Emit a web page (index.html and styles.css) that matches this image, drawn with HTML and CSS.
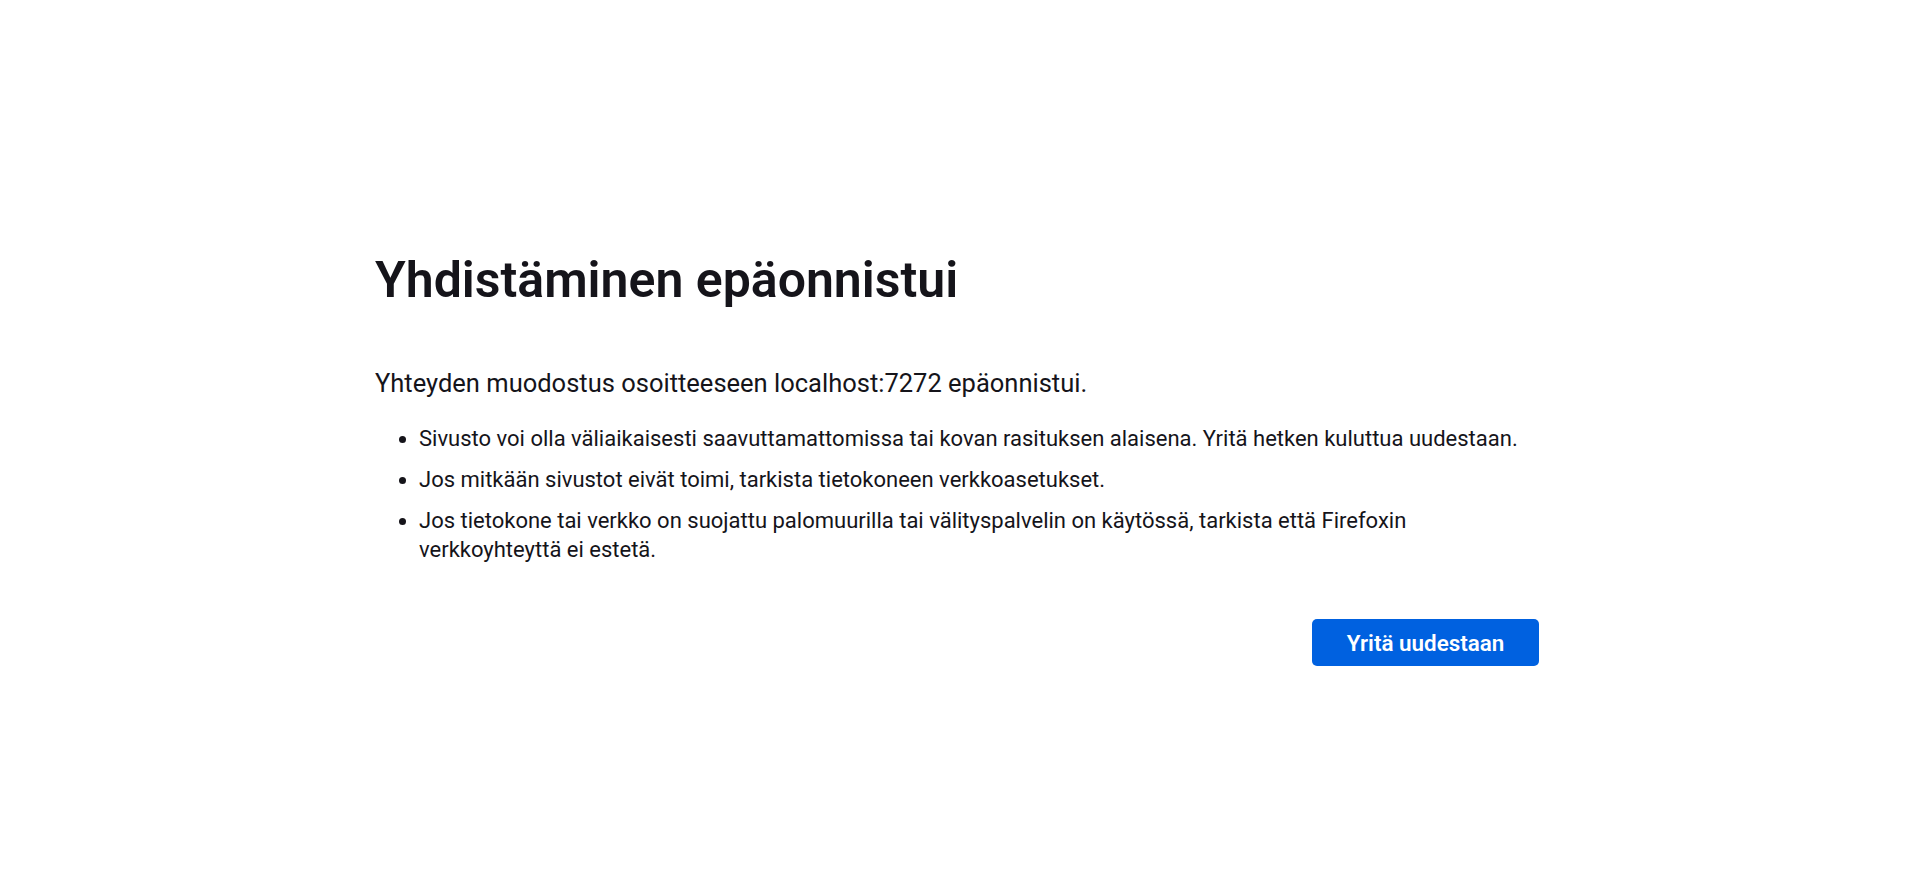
FILE: index.html
```html
<!DOCTYPE html>
<html lang="fi">
<head>
<meta charset="utf-8">
<title>Ongelma sivun lataamisessa</title>
<link rel="stylesheet" href="styles.css">
</head>
<body>
<main class="container">
  <h1 class="title">Yhdistäminen epäonnistui</h1>
  <p class="short-desc">Yhteyden muodostus osoitteeseen localhost:7272 epäonnistui.</p>
  <ul class="long-desc">
    <li>Sivusto voi olla väliaikaisesti saavuttamattomissa tai kovan rasituksen alaisena. Yritä hetken kuluttua uudestaan.</li>
    <li>Jos mitkään sivustot eivät toimi, tarkista tietokoneen verkkoasetukset.</li>
    <li>Jos tietokone tai verkko on suojattu palomuurilla tai välityspalvelin on käytössä, tarkista että Firefoxin verkkoyhteyttä ei estetä.</li>
  </ul>
  <div class="actions">
    <button class="primary" type="button">Yritä uudestaan</button>
  </div>
</main>
</body>
</html>
```
FILE: styles.css
```css
html, body {
  margin: 0;
  padding: 0;
  background: #ffffff;
}

body {
  font-family: Roboto, "Noto Sans", sans-serif;
  color: #15141a;
}

.container {
  width: 1165px;
  margin-left: calc(50% - 585px);
  padding-top: 250px;
  box-sizing: border-box;
}

.title {
  margin: 0;
  font-size: 50px;
  line-height: 60px;
  font-weight: 600;
  color: #15141a;
}

.short-desc {
  margin: 55px 0 0;
  font-size: 25.5px;
  line-height: 36px;
  font-weight: 400;
}

.long-desc {
  margin: 23px 0 0;
  padding-left: 44px;
  font-size: 22px;
  line-height: 29px;
}

.long-desc li {
  margin-bottom: 12px;
}

.long-desc li:last-child {
  margin-bottom: 0;
}

.actions {
  display: flex;
  justify-content: flex-end;
  margin-top: 55px;
  padding-right: 1px;
}

.primary {
  width: 227px;
  height: 47px;
  border: none;
  border-radius: 5px;
  background: #0061e0;
  color: #ffffff;
  font-family: Roboto, "Noto Sans", sans-serif;
  font-size: 22.4px;
  font-weight: 600;
  padding: 0;
  cursor: pointer;
}
```
